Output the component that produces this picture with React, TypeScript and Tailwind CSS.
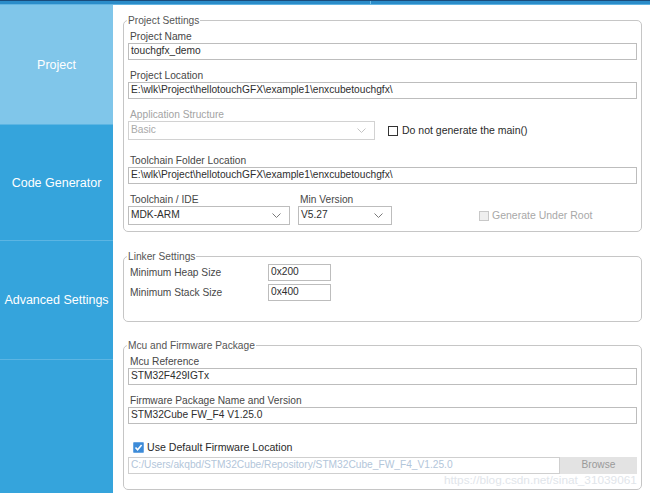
import React from "react";

function Chevron({ color = "#7a7a7a" }: { color?: string }) {
  return (
    <svg width="9" height="5" viewBox="0 0 9 5" className="shrink-0">
      <polyline points="0.5,0.5 4.5,4.5 8.5,0.5" fill="none" stroke={color} strokeWidth="1" />
    </svg>
  );
}

function Input({ value, className = "" }: { value: string; className?: string }) {
  return (
    <div
      className={`h-[17px] border border-[#bdbdbd] bg-white flex items-center pl-[2px] text-[10.2px] leading-none text-[#2e2e2e] whitespace-nowrap overflow-hidden ${className}`}
    >
      {value}
    </div>
  );
}

function Select({ value, className = "", disabled = false }: { value: string; className?: string; disabled?: boolean }) {
  return (
    <div
      className={`h-[19px] border bg-white flex items-center justify-between pl-[2px] pr-[8px] text-[10.2px] leading-none whitespace-nowrap ${
        disabled ? "border-[#d2d2d2] text-[#a9a9a9]" : "border-[#bdbdbd] text-[#2e2e2e]"
      } ${className}`}
    >
      <span>{value}</span>
      <Chevron color={disabled ? "#c4c4c4" : "#7a7a7a"} />
    </div>
  );
}

function Label({ children, className = "" }: { children: React.ReactNode; className?: string }) {
  return <div className={`pl-[2px] text-[10.2px] leading-[13px] text-[#474747] whitespace-nowrap ${className}`}>{children}</div>;
}

function Legend({ children }: { children: React.ReactNode }) {
  return <legend className="-ml-[1px] px-[1px] text-[10.2px] leading-[13px] text-[#555555]">{children}</legend>;
}

export default function App() {
  return (
    <div className="w-[650px] h-[493px] flex flex-col bg-white overflow-hidden relative font-['Liberation_Sans',Arial,sans-serif]">
      {/* top band */}
      <div className="flex flex-col shrink-0">
        <div className="h-[1px] bg-[#1a4c7c]" />
        <div className="h-[3px] flex bg-[#2b8cc9]">
          <div className="w-[370px]" />
          <div className="w-[1px] bg-[#6fbfe8]" />
        </div>
        <div className="h-[1px] bg-[#62b4e2]" />
      </div>

      <div className="flex flex-1 min-h-0">
        {/* sidebar */}
        <aside className="w-[113px] shrink-0 flex flex-col text-white text-[12.5px] leading-none">
          <div className="h-[119px] bg-[#80c6ea] flex items-center justify-center pt-[1px]">Project</div>
          <div className="h-[116px] bg-[#35a4dc] border-t border-[#5cb5e3] flex items-center justify-center pt-[1px]">
            Code Generator
          </div>
          <div className="h-[119px] bg-[#35a4dc] border-t border-[#5cb5e3] flex items-center justify-center pt-[1px]">
            Advanced Settings
          </div>
          <div className="flex-1 bg-[#35a4dc] border-t border-[#5cb5e3]" />
        </aside>

        {/* main */}
        <main className="flex-1 flex flex-col pl-[10px] pr-[8px] pt-[9px]">
          {/* Project Settings */}
          <fieldset className="border border-[#c6c6c6] rounded-[5px] px-[4px] pb-[6px] min-w-0">
            <Legend>Project Settings</Legend>
            <Label className="mt-[3px]">Project Name</Label>
            <Input value="touchgfx_demo" />
            <Label className="mt-[9px]">Project Location</Label>
            <Input value="E:\wlk\Project\hellotouchGFX\example1\enxcubetouchgfx\" />
            <Label className="mt-[9px] text-[#a3a3a3]">Application Structure</Label>
            <div className="flex items-center">
              <Select value="Basic" disabled className="w-[247px]" />
              <span className="ml-[13px] w-[10px] h-[10px] border border-[#333333] bg-white" />
              <span className="ml-[4px] text-[10.5px] leading-none text-[#2a2a2a]">Do not generate the main()</span>
            </div>
            <Label className="mt-[14px]">Toolchain Folder Location</Label>
            <Input value="E:\wlk\Project\hellotouchGFX\example1\enxcubetouchgfx\" />
            <div className="mt-[9px] flex items-end">
              <div className="flex flex-col w-[162px]">
                <Label>Toolchain / IDE</Label>
                <Select value="MDK-ARM" />
              </div>
              <div className="flex flex-col w-[94px] ml-[8px]">
                <Label>Min Version</Label>
                <Select value="V5.27" />
              </div>
              <div className="ml-[87px] h-[19px] flex items-center">
                <span className="w-[10px] h-[10px] border border-[#c8c8c8] bg-[#efefef]" />
                <span className="ml-[3px] text-[10.5px] leading-none text-[#a8a8a8]">Generate Under Root</span>
              </div>
            </div>
          </fieldset>

          {/* Linker Settings */}
          <fieldset className="mt-[18px] border border-[#c6c6c6] rounded-[5px] px-[4px] pb-[20px] min-w-0">
            <Legend>Linker Settings</Legend>
            <div className="mt-[1px] flex items-center">
              <Label className="w-[140px]">Minimum Heap Size</Label>
              <Input value="0x200" className="w-[63px]" />
            </div>
            <div className="mt-[3px] flex items-center">
              <Label className="w-[140px]">Minimum Stack Size</Label>
              <Input value="0x400" className="w-[63px]" />
            </div>
          </fieldset>

          {/* Mcu and Firmware Package */}
          <fieldset className="mt-[17px] border border-[#c6c6c6] rounded-[5px] px-[4px] pb-[15px] min-w-0">
            <Legend>Mcu and Firmware Package</Legend>
            <Label className="mt-[3px]">Mcu Reference</Label>
            <Input value="STM32F429IGTx" />
            <Label className="mt-[9px]">Firmware Package Name and Version</Label>
            <Input value="STM32Cube FW_F4 V1.25.0" />
            <div className="mt-[15px] h-[17px] flex items-center pl-[5px]">
              <span className="w-[11px] h-[11px] rounded-[1px] bg-[#3d8bd8] border border-[#6aa6e2] flex items-center justify-center">
                <svg width="9" height="9" viewBox="0 0 9 9">
                  <polyline points="1.5,4.5 3.6,6.8 7.6,2" fill="none" stroke="#ffffff" strokeWidth="1.6" />
                </svg>
              </span>
              <span className="ml-[3px] text-[10.6px] leading-none text-[#2a2a2a]">Use Default Firmware Location</span>
            </div>
            <div className="mt-[1px] flex">
              <div className="flex-1 h-[17px] border border-[#cfcfcf] bg-white flex items-center pl-[2px] text-[10.2px] leading-none text-[#b3c6da] whitespace-nowrap overflow-hidden">
                C:/Users/akqbd/STM32Cube/Repository/STM32Cube_FW_F4_V1.25.0
              </div>
              <div className="w-[77px] h-[17px] bg-[#e3e3e3] flex items-center justify-center text-[10.2px] leading-none text-[#9a9a9a]">
                Browse
              </div>
            </div>
          </fieldset>
        </main>
      </div>

      <div className="absolute left-[444px] top-[475px] text-[11.8px] leading-none text-[#e1e5ea] whitespace-nowrap">
        https://blog.csdn.net/sinat_31039061
      </div>
    </div>
  );
}
